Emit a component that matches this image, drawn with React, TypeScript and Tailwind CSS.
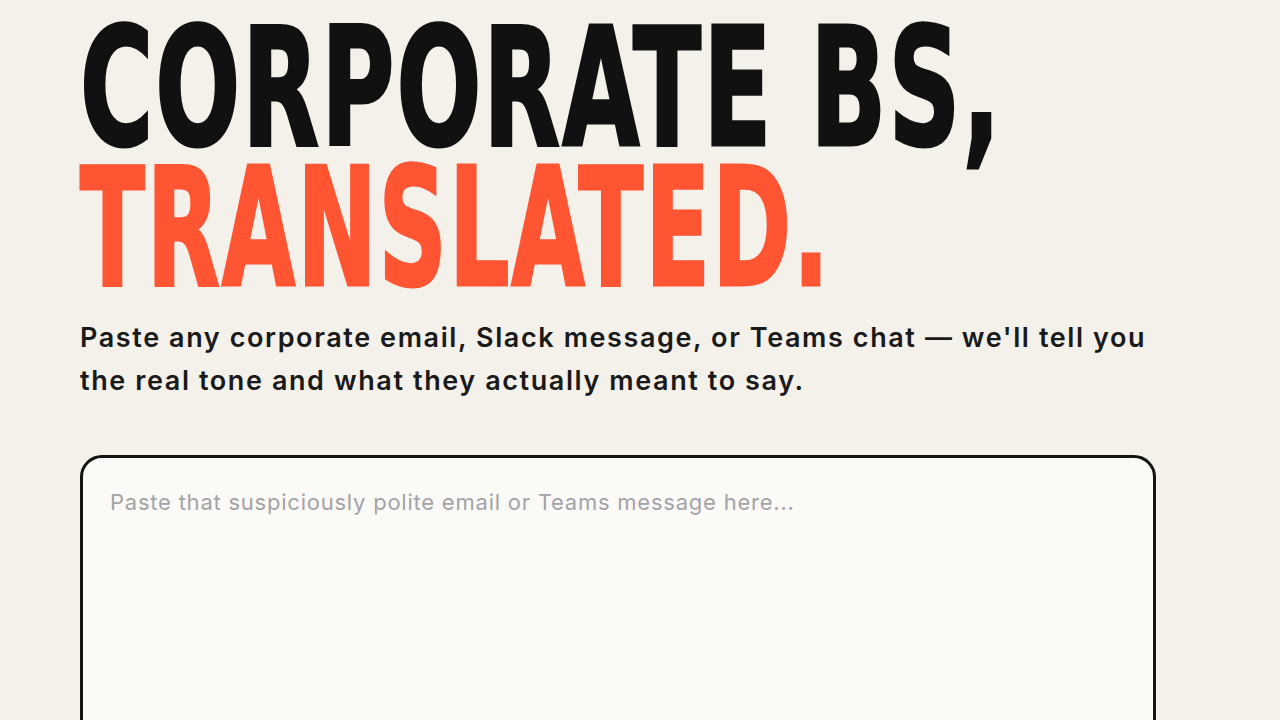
const App = () => {
    return (
        <div className="min-h-screen bg-[#f4f1ea] overflow-hidden">
            <div className="pl-[80px] pr-[124px] pt-[19px]">
                <h1 className="font-['DejaVu_Sans_Condensed','DejaVu_Sans',sans-serif] font-bold text-[164px] leading-[140px] tracking-[3px] uppercase whitespace-nowrap [-webkit-text-stroke:3px_currentColor]">
                    <span className="block origin-left scale-x-[0.677] text-[#111111]">Corporate BS,</span>
                    <span className="block origin-left scale-x-[0.6436] text-[#ff5533]">Translated.</span>
                </h1>
                <p className="mt-[17px] font-['Inter',sans-serif] font-semibold text-[27px] leading-[43px] tracking-[0.059em] text-[#1a1a1a] max-w-[1080px]">
                    Paste any corporate email, Slack message, or Teams chat — we'll tell you the real tone and what they actually meant to say.
                </p>
                <div className="mt-[53px]">
                    <textarea
                        className="block w-full h-[300px] resize-none rounded-[22px] border-[3px] border-[#141414] bg-[#fbfaf7] pl-[27px] pr-[28px] pt-[28px] pb-[30px] font-['Inter',sans-serif] text-[22px] tracking-[0.035em] text-[#1a1a1a] placeholder:text-[#a3a3a8] outline-none"
                        placeholder="Paste that suspiciously polite email or Teams message here..."
                    />
                </div>
            </div>
        </div>
    )
}

export default App
